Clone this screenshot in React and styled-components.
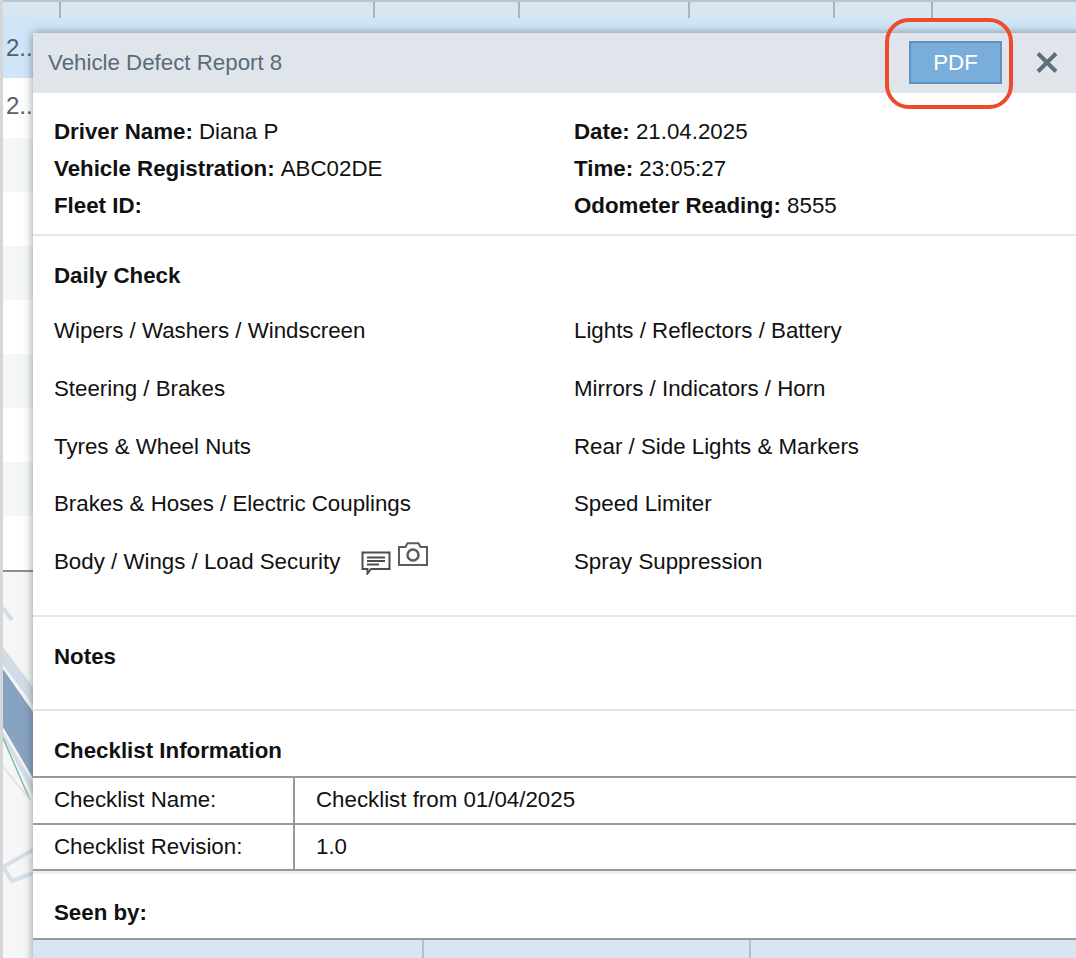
import styled, { createGlobalStyle } from 'styled-components';

const Global = createGlobalStyle`
    html, body {
        margin: 0;
        padding: 0;
        background: #fff;
    }
    body {
        font-family: "Liberation Sans", Arial, sans-serif;
        color: #111;
    }
`;

const Page = styled.div`
    position: relative;
    width: 1076px;
    height: 958px;
    overflow: hidden;
    background: #fff;
    border-left: 3px solid #d4d6d8;
    box-sizing: border-box;
`;

const TopEdge = styled.div`
    height: 2px;
    background: #b6c7d3;
`;

const HeaderRow = styled.div`
    display: grid;
    grid-template-columns: 58px 314px 145px 170px 145px 98px 1fr;
    height: 16px;
    background: #d9e6f2;
`;

const HeaderCell = styled.div`
    border-right: 2px solid #aab4bd;
    box-sizing: border-box;
    &:last-child { border-right: 0; }
`;

const Row = styled.div`
    height: ${p => p.$h}px;
    box-sizing: border-box;
    padding: 0 0 ${p => p.$pb || 0}px 3px;
    display: flex;
    align-items: center;
    font-size: 24px;
    color: #555f68;
    background: ${p => p.$bg};
`;

const MapArea = styled.div`
    height: 388px;
    border-top: 2px solid #8c8f92;
    background: #f6f6f6;
`;

const MapDrawing = styled.svg`
    display: block;
`;

const Modal = styled.div`
    position: absolute;
    left: 30px;
    top: 33px;
    width: 1060px;
    height: 940px;
    background: #fff;
    box-shadow: 0 0 9px rgba(40, 50, 60, 0.5);
`;

const ModalHead = styled.div`
    height: 60px;
    background: #e0e5eb;
    display: flex;
    align-items: center;
    padding-left: 15px;
    box-sizing: border-box;
`;

const ModalTitle = styled.div`
    font-size: 22.3px;
    color: #5b6b78;
    flex: 1;
`;

const PdfButton = styled.button`
    width: 93px;
    height: 43px;
    padding: 0;
    margin-top: -1px;
    box-sizing: border-box;
    background: #7aaeda;
    border: 2px solid #5f92bd;
    color: #fff;
    font-family: inherit;
    font-size: 22.3px;
`;

const CloseButton = styled.button`
    width: 24px;
    height: 24px;
    margin: 0 34px 0 33px;
    padding: 0;
    border: 0;
    background: none;
    display: flex;
`;

const Callout = styled.div`
    position: absolute;
    left: 882px;
    top: 18px;
    width: 128px;
    height: 91px;
    box-sizing: border-box;
    border: 4px solid #ee4a2c;
    border-radius: 24px;
`;

const Section = styled.section`
    height: ${p => p.$h}px;
    box-sizing: border-box;
    padding: ${p => p.$top}px 21px 0;
    border-bottom: ${p => (p.$line ? '2px solid #e6e6e6' : '0')};
    border-top: ${p => (p.$seam ? '3px solid #f0f0f0' : '0')};
`;

const Columns = styled.div`
    display: grid;
    grid-template-columns: 520px 1fr;
    row-gap: ${p => p.$gap}px;
    margin-top: ${p => p.$mt || 0}px;
`;

const Line = styled.div`
    font-size: 22.3px;
    height: 25px;
    line-height: 25px;
    white-space: nowrap;
    display: flex;
    align-items: center;
`;

const Bold = styled.b`
    font-weight: 700;
    white-space: pre;
`;

const Heading = styled.h2`
    margin: 0;
    font-size: 22.3px;
    line-height: 25px;
    font-weight: 700;
`;

const CheckIcons = styled.span`
    display: inline-flex;
    align-items: flex-start;
    margin-left: 21px;
    gap: 7px;
`;

const CommentIcon = styled.svg`
    margin-top: 3px;
`;

const CameraIcon = styled.svg`
    margin-top: -6px;
`;

const InfoTable = styled.div`
    border-top: 2px solid #999;
    display: grid;
    grid-template-columns: 262px 1fr;
`;

const InfoCell = styled.div`
    height: 46.5px;
    box-sizing: border-box;
    border-bottom: 2px solid #999;
    border-right: ${p => (p.$label ? '2px solid #999' : '0')};
    padding-left: 21px;
    font-size: 22.3px;
    display: flex;
    align-items: center;
`;

const SeenHead = styled.div`
    border-top: 2px solid #999;
    height: 20px;
    background: #d9e6f2;
    display: grid;
    grid-template-columns: 391px 327px 1fr;
`;

const SeenCell = styled.div`
    border-right: 2px solid #b6bec6;
    &:last-child { border-right: 0; }
`;

const leftChecks = [
    'Wipers / Washers / Windscreen',
    'Steering / Brakes',
    'Tyres & Wheel Nuts',
    'Brakes & Hoses / Electric Couplings',
    'Body / Wings / Load Security',
];

const rightChecks = [
    'Lights / Reflectors / Battery',
    'Mirrors / Indicators / Horn',
    'Rear / Side Lights & Markers',
    'Speed Limiter',
    'Spray Suppression',
];

const stripes = [
    { h: 60, bg: '#d0e5f7', text: '2..' },
    { h: 60, bg: '#fff', text: '2..', pb: 4 },
    { h: 54, bg: '#f5f7f7' },
    { h: 54, bg: '#fff' },
    { h: 54, bg: '#f5f7f7' },
    { h: 54, bg: '#fff' },
    { h: 54, bg: '#f5f7f7' },
    { h: 54, bg: '#fff' },
    { h: 54, bg: '#f5f7f7' },
    { h: 54, bg: '#fff' },
];

function MapSketch() {
    return (
        <MapDrawing width="30" height="386" viewBox="0 572 30 386">
            <path d="M0 608 L9 620" stroke="#d3dde8" strokeWidth="4" fill="none" />
            <path d="M0 647 L30 687 L30 705 L0 665 Z" fill="#d2dce6" />
            <path d="M0 669 L30 712 L30 778 L0 727 Z" fill="#88a2c2" />
            <path d="M0 732 L30 783 L30 795 L0 738 Z" fill="#d5dee8" />
            <path d="M0 738 L27 800" stroke="#7cbfa6" strokeWidth="1.5" fill="none" />
            <path d="M0 767 L27 800" stroke="#e4e4e4" strokeWidth="2" fill="none" />
            <path d="M30 850 L0 867 L9 881 L30 873" stroke="#d3dfe9" strokeWidth="4" fill="none" />
        </MapDrawing>
    );
}

function App() {
    return (
        <>
            <Global />
            <Page>
                <TopEdge />
                <HeaderRow>
                    {[0, 1, 2, 3, 4, 5, 6].map(i => <HeaderCell key={i} />)}
                </HeaderRow>
                {stripes.map((row, i) => (
                    <Row key={i} $h={row.h} $bg={row.bg} $pb={row.pb}>{row.text}</Row>
                ))}
                <MapArea>
                    <MapSketch />
                </MapArea>

                <Modal>
                    <ModalHead>
                        <ModalTitle>Vehicle Defect Report 8</ModalTitle>
                        <PdfButton>PDF</PdfButton>
                        <CloseButton aria-label="Close">
                            <svg width="24" height="24" viewBox="0 0 24 24">
                                <path d="M3 2.5 L21 20.5 M21 2.5 L3 20.5" stroke="#5e6e7a" strokeWidth="4" fill="none" />
                            </svg>
                        </CloseButton>
                    </ModalHead>

                    <Section $h={143} $top={26} $line>
                        <Columns $gap={12}>
                            <Line><Bold>Driver Name: </Bold>Diana P</Line>
                            <Line><Bold>Date: </Bold>21.04.2025</Line>
                            <Line><Bold>Vehicle Registration: </Bold>ABC02DE</Line>
                            <Line><Bold>Time: </Bold>23:05:27</Line>
                            <Line><Bold>Fleet ID:</Bold></Line>
                            <Line><Bold>Odometer Reading: </Bold>8555</Line>
                        </Columns>
                    </Section>

                    <Section $h={381} $top={27} $line>
                        <Heading>Daily Check</Heading>
                        <Columns $gap={32.8} $mt={30}>
                            {leftChecks.flatMap((text, i) => [
                                <Line key={text}>
                                    {text}
                                    {i === 4 && (
                                        <CheckIcons>
                                            <CommentIcon width="30" height="24" viewBox="0 0 30 24" fill="none" stroke="#4d4d4d" strokeWidth="2">
                                                <path d="M1.5 1.5 H28.5 V18 H10 L6.5 22.5 V18 H1.5 Z" />
                                                <path d="M6 6.5 H24 M6 10 H24 M6 13.5 H18" />
                                            </CommentIcon>
                                            <CameraIcon width="30" height="24" viewBox="0 0 30 24" fill="none" stroke="#5c5c5c" strokeWidth="2">
                                                <path d="M1 5 H7.5 L9.5 1.2 H20.5 L22.5 5 H29 V23 H1 Z" />
                                                <circle cx="15" cy="13" r="5.5" strokeWidth="2.5" />
                                            </CameraIcon>
                                        </CheckIcons>
                                    )}
                                </Line>,
                                <Line key={rightChecks[i]}>{rightChecks[i]}</Line>,
                            ])}
                        </Columns>
                    </Section>

                    <Section $h={94} $top={27} $line>
                        <Heading>Notes</Heading>
                    </Section>

                    <Section $h={65} $top={27}>
                        <Heading>Checklist Information</Heading>
                    </Section>
                    <InfoTable>
                        <InfoCell $label>Checklist Name:</InfoCell>
                        <InfoCell>Checklist from 01/04/2025</InfoCell>
                        <InfoCell $label>Checklist Revision:</InfoCell>
                        <InfoCell>1.0</InfoCell>
                    </InfoTable>

                    <Section $h={67} $top={26} $seam>
                        <Heading>Seen by:</Heading>
                    </Section>
                    <SeenHead>
                        <SeenCell />
                        <SeenCell />
                        <SeenCell />
                    </SeenHead>
                </Modal>

                <Callout />
            </Page>
        </>
    );
}

export default App;
